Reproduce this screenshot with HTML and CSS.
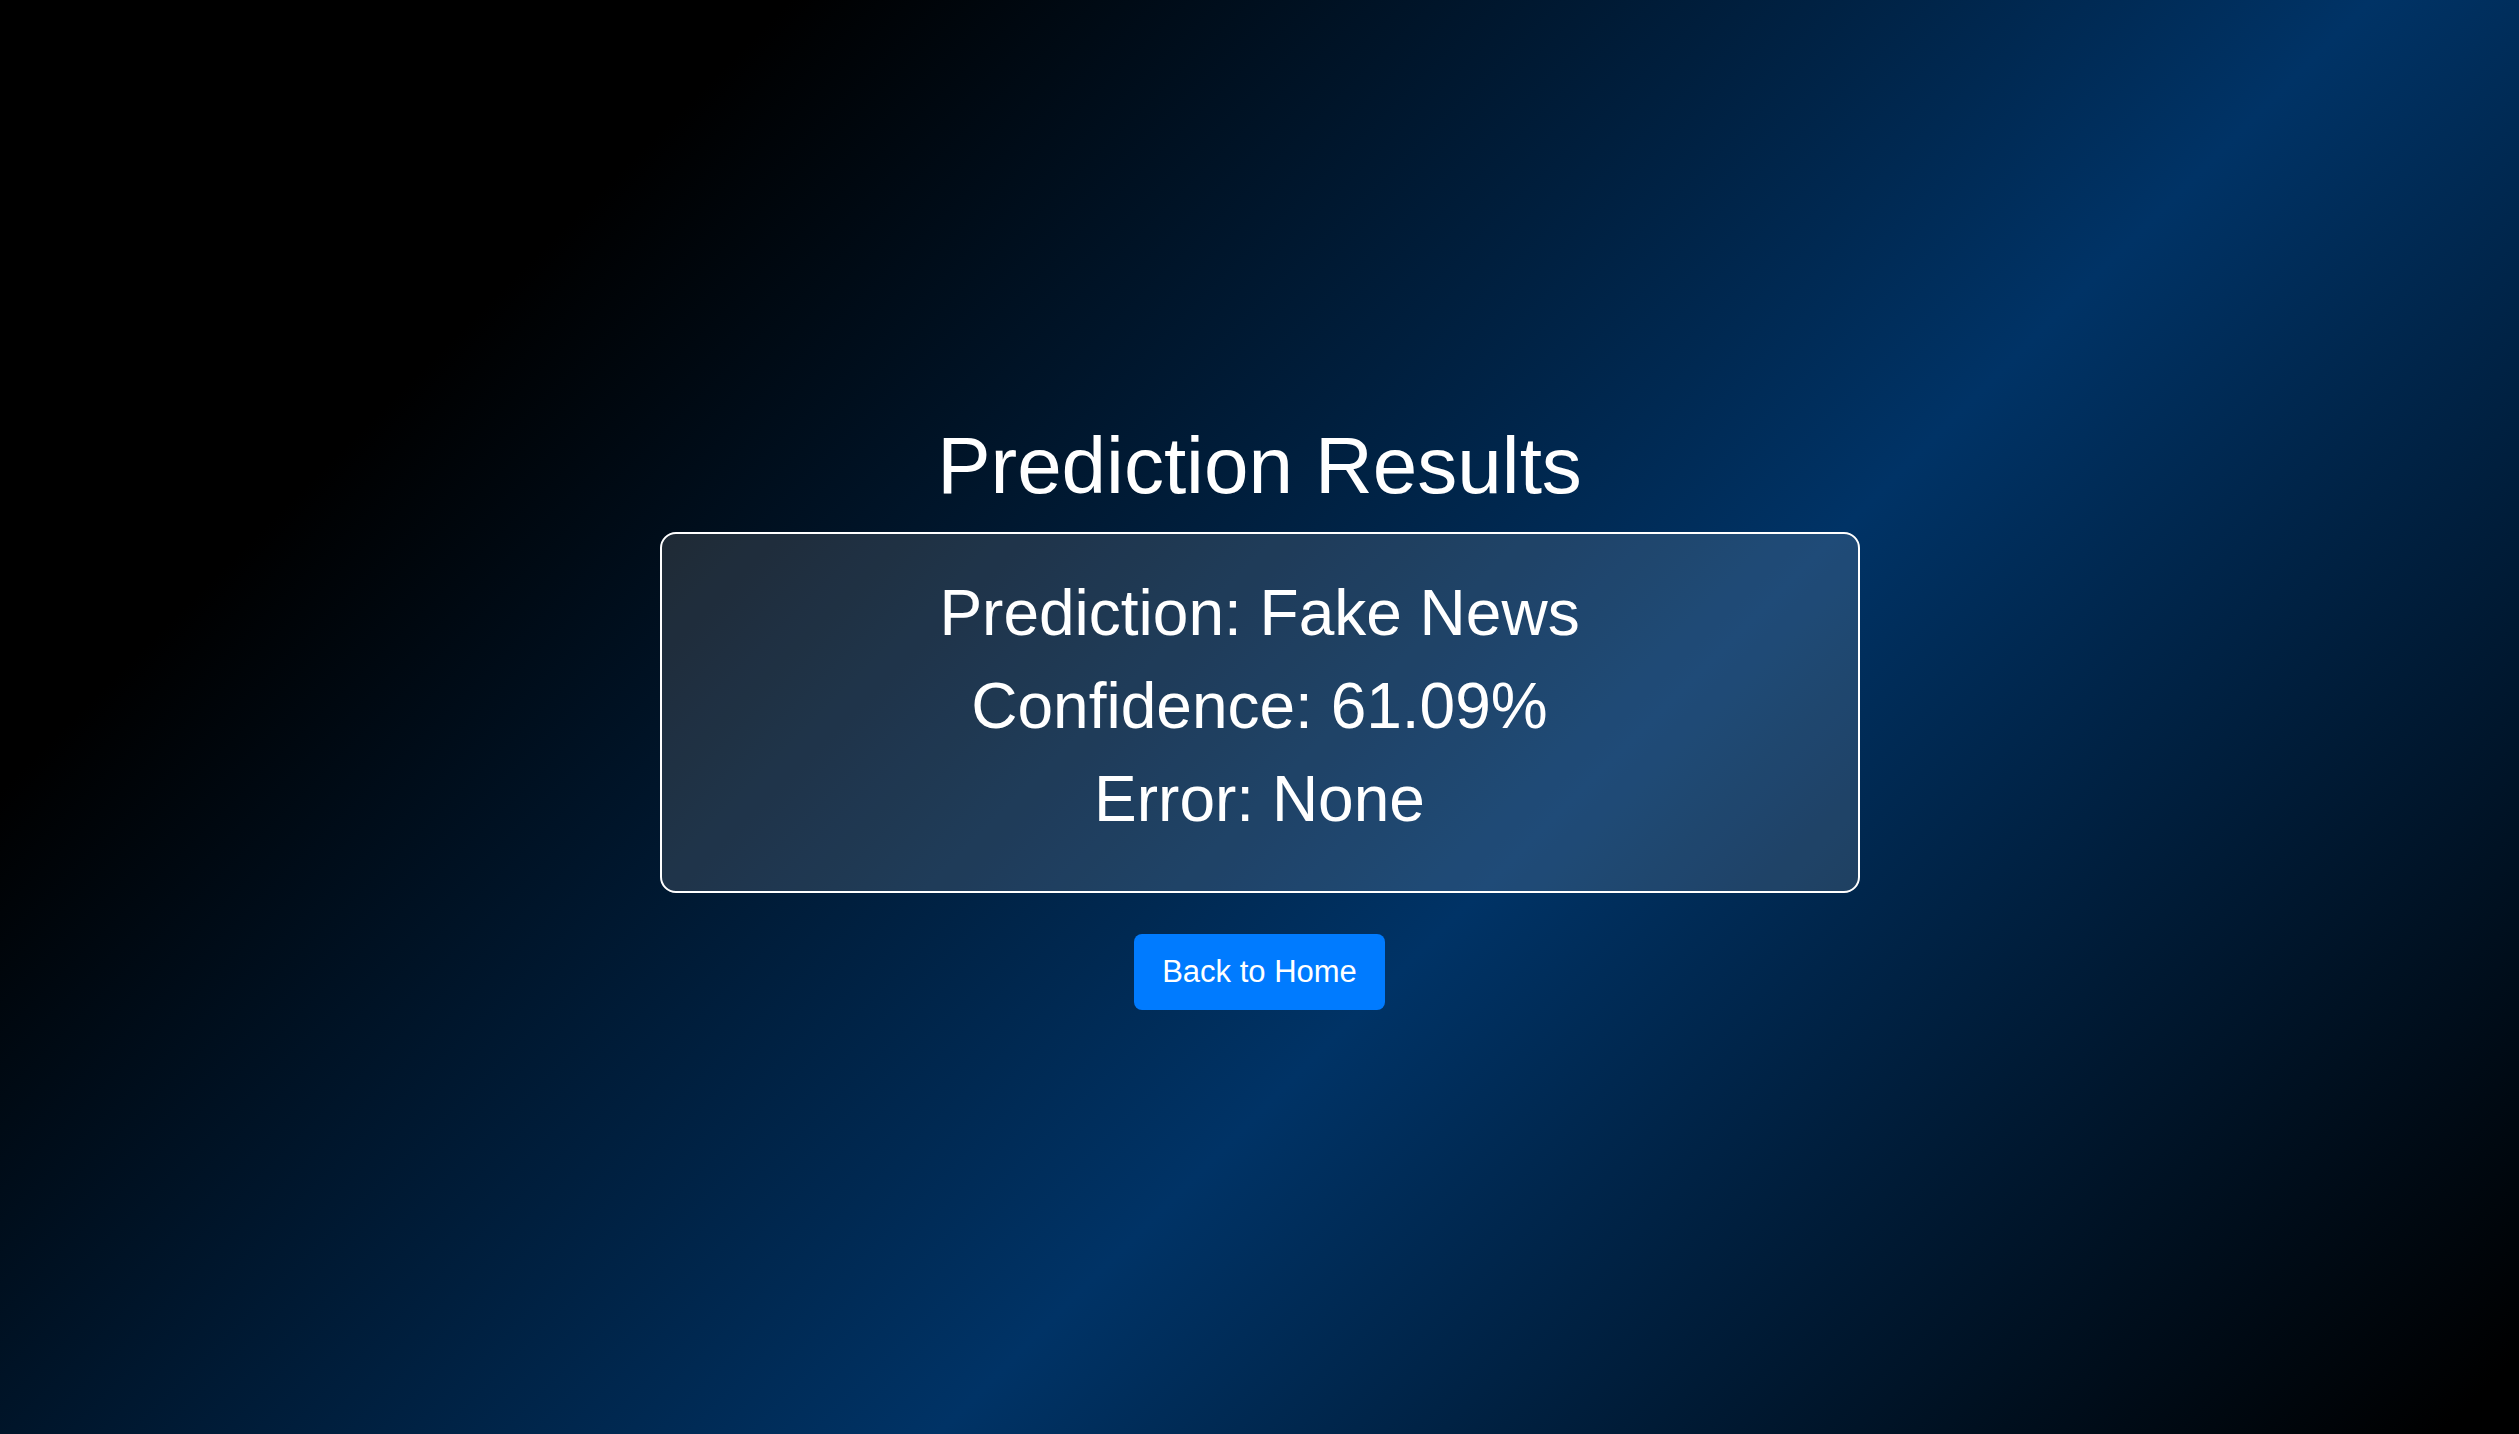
FILE: index.html
```html
<!DOCTYPE html>
<html lang="en">
<head>
<meta charset="utf-8">
<title>Prediction Results</title>
<link rel="stylesheet" href="styles.css">
</head>
<body>
  <main class="page">
    <h1 class="title">Prediction Results</h1>
    <section class="result-box">
      <p class="result-line">Prediction: Fake News</p>
      <p class="result-line">Confidence: 61.09%</p>
      <p class="result-line">Error: None</p>
    </section>
    <a class="btn" href="#">Back to Home</a>
  </main>
</body>
</html>
```

FILE: styles.css
```css
html, body {
  margin: 0;
  padding: 0;
}

body {
  min-height: 100vh;
  font-family: "Liberation Sans", Arial, sans-serif;
  color: #ffffff;
  background: linear-gradient(135deg, #000000 0%, #000000 20%, #003366 60%, #000000 98%);
  background-attachment: fixed;
}

.page {
  min-height: 100vh;
  box-sizing: border-box;
  padding-bottom: 4px;
  display: flex;
  flex-direction: column;
  align-items: center;
  justify-content: center;
}

.title {
  font-size: 80px;
  font-weight: normal;
  line-height: normal;
  margin: 0 0 20px;
}

.result-box {
  width: 1200px;
  box-sizing: border-box;
  border: 2px solid #ffffff;
  border-radius: 16px;
  background: rgba(255, 255, 255, 0.12);
  padding: 33px 0 45px;
  text-align: center;
}

.result-line {
  font-size: 64px;
  line-height: 93px;
  margin: 0;
}

.btn {
  margin-top: 41px;
  background: #007bff;
  color: #ffffff;
  font-size: 31px;
  line-height: normal;
  padding: 20px 28px;
  border-radius: 8px;
  text-decoration: none;
}
```
